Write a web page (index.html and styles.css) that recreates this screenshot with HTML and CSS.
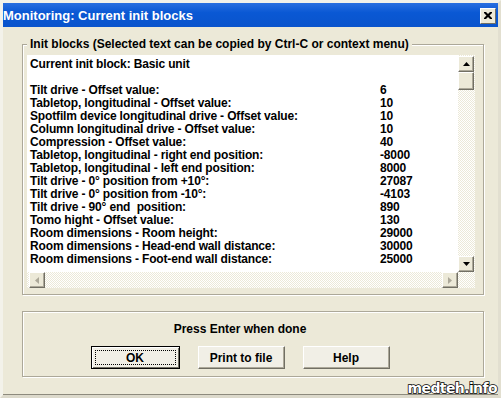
FILE: index.html
```html
<!DOCTYPE html>
<html lang="en">
<head>
    <meta charset="UTF-8">
    <title>Monitoring: Current init blocks</title>
    <link rel="stylesheet" href="styles.css">
</head>
<body>
    <div class="window">
        <div class="titlebar">
            <span class="title">Monitoring: Current init blocks</span>
            <span class="close">
                <svg width="8" height="7" viewBox="0 0 8 7"><path d="M0 0h2l2 2 2-2h2v1l-2.5 2.5 2.5 2.5v1h-2l-2-2-2 2h-2v-1l2.5-2.5-2.5-2.5z" fill="#000"/></svg>
            </span>
        </div>
        <div class="content">
            <div class="group blocks">
                <span class="group-label">Init blocks (Selected text can be copied by Ctrl-C or context menu)</span>
                <div class="scrollbox">
                    <div class="scroll-main">
                        <div class="textarea">
                            <div class="line">Current init block: Basic unit</div>
                            <div class="line"></div>
                            <div class="line"><span class="name">Tilt drive - Offset value:</span><span>6</span></div>
                            <div class="line"><span class="name">Tabletop, longitudinal - Offset value:</span><span>10</span></div>
                            <div class="line"><span class="name">Spotfilm device longitudinal drive - Offset value:</span><span>10</span></div>
                            <div class="line"><span class="name">Column longitudinal drive - Offset value:</span><span>10</span></div>
                            <div class="line"><span class="name">Compression - Offset value:</span><span>40</span></div>
                            <div class="line"><span class="name">Tabletop, longitudinal - right end position:</span><span>-8000</span></div>
                            <div class="line"><span class="name">Tabletop, longitudinal - left end position:</span><span>8000</span></div>
                            <div class="line"><span class="name">Tilt drive - 0° position from +10°:</span><span>27087</span></div>
                            <div class="line"><span class="name">Tilt drive - 0° position from -10°:</span><span>-4103</span></div>
                            <div class="line"><span class="name">Tilt drive - 90° end&nbsp; position:</span><span>890</span></div>
                            <div class="line"><span class="name">Tomo hight - Offset value:</span><span>130</span></div>
                            <div class="line"><span class="name">Room dimensions - Room height:</span><span>29000</span></div>
                            <div class="line"><span class="name">Room dimensions - Head-end wall distance:</span><span>30000</span></div>
                            <div class="line"><span class="name">Room dimensions - Foot-end wall distance:</span><span>25000</span></div>
                        </div>
                        <div class="vscroll">
                            <span class="sbtn">
                                <svg width="7" height="4" viewBox="0 0 7 4"><path d="M3.5 0L7 4H0z" fill="#000"/></svg>
                            </span>
                            <span class="sbtn thumb"></span>
                            <span class="track"></span>
                            <span class="sbtn">
                                <svg width="7" height="4" viewBox="0 0 7 4"><path d="M0 0h7L3.5 4z" fill="#000"/></svg>
                            </span>
                        </div>
                    </div>
                    <div class="hscroll">
                        <span class="sbtn">
                            <svg width="4" height="7" viewBox="0 0 4 7"><path d="M4 0v7L0 3.5z" fill="#aca899"/></svg>
                        </span>
                        <span class="track"></span>
                        <span class="sbtn">
                            <svg width="4" height="7" viewBox="0 0 4 7"><path d="M0 0v7l4-3.5z" fill="#aca899"/></svg>
                        </span>
                    </div>
                </div>
            </div>
            <div class="group actions">
                <p class="hint">Press Enter when done</p>
                <div class="buttons">
                    <button class="btn default"><span>OK</span></button>
                    <button class="btn">Print to file</button>
                    <button class="btn">Help</button>
                </div>
            </div>
        </div>
        <span class="watermark">medteh.info</span>
    </div>
</body>
</html>
```

FILE: styles.css
```css
body {
    margin: 0;
    background: #ece9d8;
    font-family: "Liberation Sans", Arial, sans-serif;
}
.window {
    position: relative;
    width: 501px;
    height: 398px;
    box-sizing: border-box;
    display: flex;
    flex-direction: column;
    background: #ece9d8;
    border-top: 3px solid #f3f2ea;
    border-left: 3px solid #f3f2ea;
    border-right: 3px solid #e2dfd0;
    border-bottom: 3px solid #dcd9cb;
    box-shadow: inset 0 -1px 0 #8d8a7d;
}
.titlebar {
    height: 24px;
    display: flex;
    align-items: center;
    justify-content: space-between;
    padding: 0 2px 0 0;
    background: linear-gradient(to bottom, #2a6fe0, #0a58d4 40%, #0a54cc);
}
.title {
    color: white;
    font-weight: bold;
    font-size: 13px;
}
.close {
    width: 16px;
    height: 16px;
    box-sizing: border-box;
    display: flex;
    align-items: center;
    justify-content: center;
    background: #ece9d8;
    border-top: 1px solid #fff;
    border-left: 1px solid #fff;
    border-right: 1px solid #716f64;
    border-bottom: 1px solid #716f64;
    margin-top: 1px;
}
.content {
    flex: 1;
    display: flex;
    flex-direction: column;
    padding: 17px 14px 0 19px;
    gap: 16px;
}
.group {
    display: flex;
    flex-direction: column;
    border: 1px solid #aca899;
    box-shadow: 1px 1px 0 #fff, inset 1px 1px 0 #fff;
    font-size: 12px;
    font-weight: bold;
    color: #000;
}
.blocks {
    padding: 0 8px 6px 4px;
}
.group-label {
    align-self: flex-start;
    margin: -7px 0 0 0;
    padding: 0 3px;
    background: #ece9d8;
    line-height: 13px;
}
.scrollbox {
    margin-top: 4px;
    display: flex;
    flex-direction: column;
    background: repeating-conic-gradient(#fff 0 25%, #ece9d8 0 50%) 0 0 / 2px 2px;
}
.scroll-main {
    display: flex;
}
.textarea {
    width: 431px;
    height: 217px;
    box-sizing: border-box;
    padding: 3px 0 0 3px;
    background: #fff;
    overflow: hidden;
    letter-spacing: -0.15px;
}
.line {
    display: flex;
    height: 13px;
    line-height: 13px;
    white-space: pre;
}
.name {
    width: 350px;
}
.vscroll {
    width: 17px;
    display: flex;
    flex-direction: column;
    padding-top: 1px;
}
.sbtn {
    width: 16px;
    height: 16px;
    box-sizing: border-box;
    display: flex;
    align-items: center;
    justify-content: center;
    background: #ece9d8;
    border-top: 1px solid #fff;
    border-left: 1px solid #fff;
    border-right: 1px solid #716f64;
    border-bottom: 1px solid #716f64;
    box-shadow: inset -1px -1px 0 #aca899;
}
.thumb {
    height: 18px;
}
.track {
    flex: 1;
}
.hscroll {
    display: flex;
    height: 16px;
    width: 431px;
    padding-left: 2px;
    box-sizing: border-box;
}
.actions {
    height: 64px;
    align-items: center;
    padding-right: 26px;
}
.hint {
    margin: 11px 0 0 0;
    line-height: 13px;
}
.buttons {
    margin-top: 10px;
    display: flex;
    gap: 18px;
}
.btn {
    width: 87px;
    height: 23px;
    box-sizing: border-box;
    font-family: "Liberation Sans", Arial, sans-serif;
    font-size: 12px;
    font-weight: bold;
    color: #000;
    background: #f1efe6;
    border-top: 1px solid #fff;
    border-left: 1px solid #fff;
    border-right: 1px solid #716f64;
    border-bottom: 1px solid #716f64;
    box-shadow: inset -1px -1px 0 #aca899;
    padding: 0;
}
.default {
    width: 89px;
    border: 1px solid #000;
    box-shadow: inset 1px 1px 0 #fff, inset -1px -1px 0 #716f64;
    padding: 3px;
}
.default span {
    display: flex;
    height: 100%;
    align-items: center;
    justify-content: center;
    border: 1px dotted #000;
    box-sizing: border-box;
}
.watermark {
    position: absolute;
    right: 1px;
    bottom: -1px;
    font-family: "DejaVu Sans", sans-serif;
    font-weight: bold;
    font-size: 14px;
    letter-spacing: -0.6px;
    color: #fff;
    -webkit-text-stroke: 1.5px #000;
    paint-order: stroke fill;
}
```
